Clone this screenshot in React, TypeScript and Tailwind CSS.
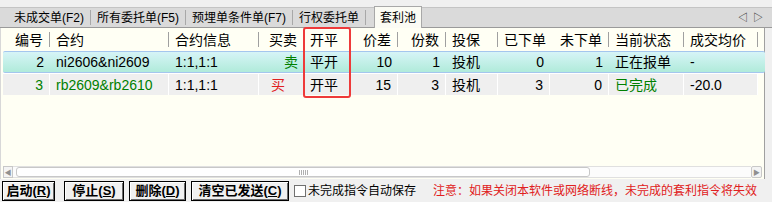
import React from "react";

const font = "font-['Liberation_Sans','Noto_Sans_CJK_SC',sans-serif]";

type Col = { w: number; title: string; right?: boolean };

const cols: Col[] = [
  { w: 49, title: "编号", right: true },
  { w: 119, title: "合约" },
  { w: 90, title: "合约信息" },
  { w: 45, title: "买卖", right: true },
  { w: 47, title: "开平" },
  { w: 47, title: "价差", right: true },
  { w: 48, title: "份数", right: true },
  { w: 52, title: "投保" },
  { w: 52, title: "已下单", right: true },
  { w: 59, title: "未下单", right: true },
  { w: 75, title: "当前状态" },
  { w: 74, title: "成交均价" },
];

type Cell = { t: string; c?: string; cls?: string };

const rows: Cell[][] = [
  [
    { t: "2" },
    { t: "ni2606&ni2609" },
    { t: "1:1,1:1" },
    { t: "卖", c: "text-[#008000]" },
    { t: "平开" },
    { t: "10" },
    { t: "1" },
    { t: "投机" },
    { t: "0" },
    { t: "1" },
    { t: "正在报单" },
    { t: "-" },
  ],
  [
    { t: "3", c: "text-[#008000]" },
    { t: "rb2609&rb2610", c: "text-[#008000]" },
    { t: "1:1,1:1" },
    { t: "买", c: "text-[#e02020]", cls: "!justify-start pl-[12px]" },
    { t: "开平" },
    { t: "15" },
    { t: "3" },
    { t: "投机" },
    { t: "3" },
    { t: "0" },
    { t: "已完成", c: "text-[#008000]" },
    { t: "-20.0" },
  ],
];

function Tabs() {
  const tabs = ["未成交单(F2)", "所有委托单(F5)", "预埋单条件单(F7)", "行权委托单"];
  return (
    <div className="h-[28px] pt-[7px] bg-[#f0f0f0]">
      <div className="h-[21px] flex items-stretch bg-[#dadada] border-t border-[#c4c4c4] border-b border-b-[#9a9a9a] text-[12px] leading-none text-black">
        <div className="flex items-center pl-[14px]">
          {tabs.map((t) => (
            <React.Fragment key={t}>
              <span className="whitespace-nowrap">{t}</span>
              <span className="w-px h-[15px] bg-[#a8a8a8] mx-[6px]" />
            </React.Fragment>
          ))}
        </div>
        <div className="-mt-[2px] -mb-px ml-[2px] w-[48px] bg-[#fbfbf4] border-x border-t border-[#a8a8a8] flex items-center justify-center">
          套利池
        </div>
        <div className="flex-1" />
        <div className="flex items-center gap-[5px] pr-[9px] text-[10px] text-[#222]">
          <span>◁</span>
          <span>▷</span>
        </div>
      </div>
    </div>
  );
}

function Header() {
  return (
    <div className="h-[23px] flex text-[14px] leading-none text-black">
      {cols.map((c) => (
        <div key={c.title} style={{ width: c.w }} className="flex items-center shrink-0">
          <span className={`flex-1 px-[6px] whitespace-nowrap ${c.right ? "text-right" : "text-left"}`}>
            {c.title}
          </span>
          <span className="w-px h-[15px] bg-[#a0a0a0]" />
        </div>
      ))}
    </div>
  );
}

function Row({ cells, selected }: { cells: Cell[]; selected?: boolean }) {
  return (
    <div
      className={
        selected
          ? "h-[22px] ml-[2px] w-[762px] flex bg-gradient-to-b from-[#d6f4f7] to-[#b0ebda] border-y border-[#a4c6ee] rounded-[2px]"
          : "h-[22px] ml-[2px] flex border-t border-white"
      }
    >
      {cells.map((cell, i) => (
        <div
          key={i}
          style={{ width: i === 0 ? cols[0].w - 2 : cols[i].w }}
          className={`shrink-0 flex items-center px-[6px] text-[14px] leading-none whitespace-nowrap ${
            cols[i].right ? "justify-end" : "justify-start"
          } ${selected ? "" : "bg-[#efefef] border-r border-white"} ${cell.c ?? "text-black"} ${cell.cls ?? ""}`}
        >
          {cell.t}
        </div>
      ))}
    </div>
  );
}

function Scrollbar() {
  return (
    <div className="h-[12px] mx-[2px] mb-px flex items-stretch">
      <div className="w-[10px] border border-[#c8c8c8] bg-[#f4f4f4] flex items-center justify-center text-[7px] text-[#909090] leading-none">
        ◀
      </div>
      <div className="flex-1 flex bg-[#fcfcfc] border-y border-[#e0e0e0] px-[3px]">
        <div className="w-[574px] bg-white border border-[#c8c8c8] rounded-[3px] flex items-center justify-center">
          <div className="flex gap-[1px]">
            <span className="w-px h-[5px] bg-[#b0b0b0]" />
            <span className="w-px h-[5px] bg-[#b0b0b0]" />
            <span className="w-px h-[5px] bg-[#b0b0b0]" />
            <span className="w-px h-[5px] bg-[#b0b0b0]" />
            <span className="w-px h-[5px] bg-[#b0b0b0]" />
          </div>
        </div>
      </div>
      <div className="w-[11px] border border-[#c8c8c8] rounded-[2px] bg-[#f4f4f4] flex items-center justify-center text-[7px] text-[#909090] leading-none">
        ▶
      </div>
    </div>
  );
}

function Btn({ label, k, w }: { label: string; k: string; w: number }) {
  return (
    <button
      style={{ width: w }}
      className="h-[20px] shrink-0 border border-black bg-[#f0f0f0] shadow-[inset_1px_1px_0_#fff,inset_-1px_-1px_0_#6a6a6a] text-[13px] font-bold leading-none text-black flex items-center justify-center whitespace-nowrap"
    >
      {label}(<span className="underline">{k}</span>)
    </button>
  );
}

export default function App() {
  return (
    <div className={`w-[772px] h-[202px] bg-[#f0f0f0] flex flex-col overflow-hidden ${font}`}>
      <Tabs />
      <div className="relative w-[765px] h-[151px] bg-[#fffff4] border-l border-[#d8d8d8] border-r border-r-[#a0a0a0] flex flex-col">
        <Header />
        <Row cells={rows[0]} selected />
        <Row cells={rows[1]} />
        <div className="flex-1" />
        <Scrollbar />
        {/* red highlight frame over the 开平 column */}
        <div className="absolute left-[302px] -top-[1px] w-[48px] h-[71px] border-2 border-[#ee3a3a] rounded-[3px]" />
      </div>
      <div className="flex-1 flex items-center pl-[2px]">
        <Btn label="启动" k="R" w={53} />
        <div className="w-[9px]" />
        <Btn label="停止" k="S" w={60} />
        <div className="w-[5px]" />
        <Btn label="删除" k="D" w={57} />
        <div className="w-[5px]" />
        <Btn label="清空已发送" k="C" w={98} />
        <div className="w-[5px] shrink-0" />
        <span className="w-[12px] h-[12px] border border-[#707070] bg-white shrink-0" />
        <span className="ml-[2px] text-[12px] text-black whitespace-nowrap">未完成指令自动保存</span>
        <span className="ml-[17px] text-[12px] text-[#e02020] whitespace-nowrap">
          注意：如果关闭本软件或网络断线，未完成的套利指令将失效
        </span>
      </div>
    </div>
  );
}
